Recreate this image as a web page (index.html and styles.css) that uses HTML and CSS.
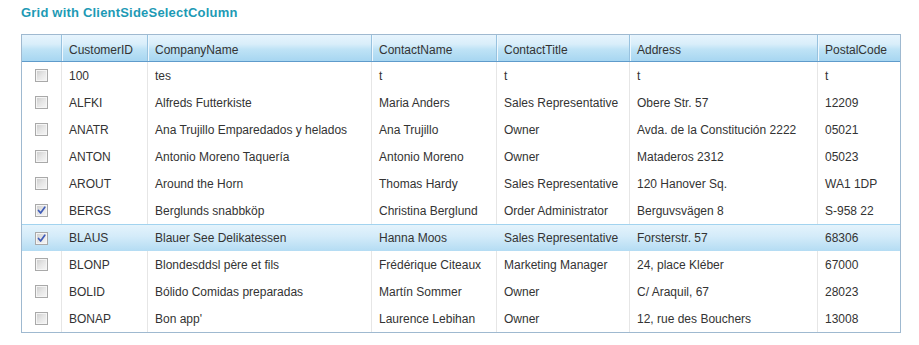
FILE: index.html
```html
<!DOCTYPE html>
<html lang="en">
<head>
<meta charset="utf-8">
<title>Grid with ClientSideSelectColumn</title>
<link rel="stylesheet" href="styles.css">
</head>
<body>
<div class="page">
  <h2 class="title">Grid with ClientSideSelectColumn</h2>
  <div class="grid">
    <div class="row head">
      <div class="cell sel"></div>
      <div class="cell">CustomerID</div>
      <div class="cell">CompanyName</div>
      <div class="cell">ContactName</div>
      <div class="cell">ContactTitle</div>
      <div class="cell">Address</div>
      <div class="cell">PostalCode</div>
    </div>
    <div class="row">
      <div class="cell sel"><span class="cb"></span></div>
      <div class="cell">100</div><div class="cell">tes</div><div class="cell">t</div><div class="cell">t</div><div class="cell">t</div><div class="cell">t</div>
    </div>
    <div class="row">
      <div class="cell sel"><span class="cb"></span></div>
      <div class="cell">ALFKI</div><div class="cell">Alfreds Futterkiste</div><div class="cell">Maria Anders</div><div class="cell">Sales Representative</div><div class="cell">Obere Str. 57</div><div class="cell">12209</div>
    </div>
    <div class="row">
      <div class="cell sel"><span class="cb"></span></div>
      <div class="cell">ANATR</div><div class="cell">Ana Trujillo Emparedados y helados</div><div class="cell">Ana Trujillo</div><div class="cell">Owner</div><div class="cell">Avda. de la Constitución 2222</div><div class="cell">05021</div>
    </div>
    <div class="row">
      <div class="cell sel"><span class="cb"></span></div>
      <div class="cell">ANTON</div><div class="cell">Antonio Moreno Taquería</div><div class="cell">Antonio Moreno</div><div class="cell">Owner</div><div class="cell">Mataderos 2312</div><div class="cell">05023</div>
    </div>
    <div class="row">
      <div class="cell sel"><span class="cb"></span></div>
      <div class="cell">AROUT</div><div class="cell">Around the Horn</div><div class="cell">Thomas Hardy</div><div class="cell">Sales Representative</div><div class="cell">120 Hanover Sq.</div><div class="cell">WA1 1DP</div>
    </div>
    <div class="row">
      <div class="cell sel"><span class="cb checked"><svg width="11" height="11" viewBox="0 0 11 11"><path d="M2.5 5.5 L4.6 8 L8.8 2.2" fill="none" stroke="#3f5cb8" stroke-width="1.7" stroke-linecap="round" stroke-linejoin="round"/></svg></span></div>
      <div class="cell">BERGS</div><div class="cell">Berglunds snabbköp</div><div class="cell">Christina Berglund</div><div class="cell">Order Administrator</div><div class="cell">Berguvsvägen 8</div><div class="cell">S-958 22</div>
    </div>
    <div class="row selected">
      <div class="cell sel"><span class="cb checked"><svg width="11" height="11" viewBox="0 0 11 11"><path d="M2.5 5.5 L4.6 8 L8.8 2.2" fill="none" stroke="#3f5cb8" stroke-width="1.7" stroke-linecap="round" stroke-linejoin="round"/></svg></span></div>
      <div class="cell">BLAUS</div><div class="cell">Blauer See Delikatessen</div><div class="cell">Hanna Moos</div><div class="cell">Sales Representative</div><div class="cell">Forsterstr. 57</div><div class="cell">68306</div>
    </div>
    <div class="row">
      <div class="cell sel"><span class="cb"></span></div>
      <div class="cell">BLONP</div><div class="cell">Blondesddsl père et fils</div><div class="cell">Frédérique Citeaux</div><div class="cell">Marketing Manager</div><div class="cell">24, place Kléber</div><div class="cell">67000</div>
    </div>
    <div class="row">
      <div class="cell sel"><span class="cb"></span></div>
      <div class="cell">BOLID</div><div class="cell">Bólido Comidas preparadas</div><div class="cell">Martín Sommer</div><div class="cell">Owner</div><div class="cell">C/ Araquil, 67</div><div class="cell">28023</div>
    </div>
    <div class="row">
      <div class="cell sel"><span class="cb"></span></div>
      <div class="cell">BONAP</div><div class="cell">Bon app'</div><div class="cell">Laurence Lebihan</div><div class="cell">Owner</div><div class="cell">12, rue des Bouchers</div><div class="cell">13008</div>
    </div>
  </div>
</div>
</body>
</html>
```
FILE: styles.css
```css
* { box-sizing: border-box; }
html, body { margin: 0; padding: 0; background: #ffffff; }
body {
  font-family: "Liberation Sans", Arial, sans-serif;
  font-size: 12px;
  color: #333333;
}
.page { padding: 5px 0 0 21px; }
.title {
  margin: 0 0 13px 0;
  font-size: 13px;
  line-height: 16px;
  font-weight: bold;
  letter-spacing: 0.2px;
  color: #1d9ab5;
}
.grid {
  width: 880px;
  border: 1px solid #9fb9d0;
}
.row {
  display: grid;
  grid-template-columns: 39px 86px 224px 125px 133px 188px 83px;
  height: 27px;
}
.cell {
  border-left: 1px solid #e6e6e6;
  padding-left: 7px;
  padding-top: 2px;
  line-height: 25px;
  white-space: nowrap;
  overflow: hidden;
}
.cell.sel {
  border-left: 0;
  padding-left: 0;
  padding-top: 0;
  display: flex;
  align-items: center;
  justify-content: center;
}
.head {
  height: 27px;
  border-bottom: 1px solid #5f9bcb;
  background: linear-gradient(to bottom, #e7f4fd 0%, #d9eefa 35%, #bfe3f6 55%, #a7d6f1 100%);
}
.head .cell {
  border-left: 1px solid #98c2df;
  box-shadow: inset 1px 0 0 #eef8fe;
  padding-top: 4px;
  line-height: 22px;
}
.head .cell.sel { border-left: 0; box-shadow: none; padding-top: 0; }
.selected {
  border-top: 1px solid #a2d3ef;
  background: linear-gradient(to bottom, #e4f3fc 0%, #d3ebf9 45%, #b4dcf3 100%);
}
.selected .cell { padding-top: 1px; line-height: 25px; border-left-color: transparent; }
.selected .cell.sel { padding-top: 0; }
.cb {
  width: 13px;
  height: 13px;
  margin-left: -1px;
  border: 1px solid #a9a9a9;
  box-shadow: inset 0 0 0 1px #f5f5f5;
  background: linear-gradient(135deg, #cbcbcb 0%, #e6e6e6 50%, #f7f7f7 100%);
  display: flex;
  align-items: center;
  justify-content: center;
}
.cb svg { display: block; }
```
